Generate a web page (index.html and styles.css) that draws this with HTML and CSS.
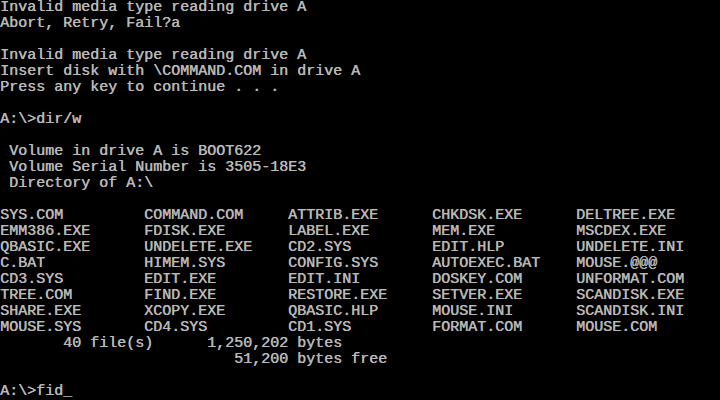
FILE: index.html
```html
<!DOCTYPE html>
<html>
<head>
<meta charset="utf-8">
<link rel="stylesheet" href="styles.css">
</head>
<body>
<pre class="screen">Invalid media type reading drive A
Abort, Retry, Fail?a

Invalid media type reading drive A
Insert disk with \COMMAND.COM in drive A
Press any key to continue . . .

A:\>dir/w

 Volume in drive A is BOOT622
 Volume Serial Number is 3505-18E3
 Directory of A:\

SYS.COM         COMMAND.COM     ATTRIB.EXE      CHKDSK.EXE      DELTREE.EXE
EMM386.EXE      FDISK.EXE       LABEL.EXE       MEM.EXE         MSCDEX.EXE
QBASIC.EXE      UNDELETE.EXE    CD2.SYS         EDIT.HLP        UNDELETE.INI
C.BAT           HIMEM.SYS       CONFIG.SYS      AUTOEXEC.BAT    MOUSE.&#64;&#64;&#64;
CD3.SYS         EDIT.EXE        EDIT.INI        DOSKEY.COM      UNFORMAT.COM
TREE.COM        FIND.EXE        RESTORE.EXE     SETVER.EXE      SCANDISK.EXE
SHARE.EXE       XCOPY.EXE       QBASIC.HLP      MOUSE.INI       SCANDISK.INI
MOUSE.SYS       CD4.SYS         CD1.SYS         FORMAT.COM      MOUSE.COM
       40 file(s)      1,250,202 bytes
                          51,200 bytes free

A:\>fid_</pre>
</body>
</html>
```
FILE: styles.css
```css
html, body {
  margin: 0;
  padding: 0;
  background: #000;
}
body {
  width: 720px;
  height: 400px;
  overflow: hidden;
}
.screen {
  margin: 0;
  padding: 0;
  color: #b8b8b8;
  font-family: "Liberation Mono", "DejaVu Sans Mono", monospace;
  font-size: 15px;
  line-height: 16px;
  white-space: pre;
  text-shadow: 0.4px 0 0 #b8b8b8;
}
```
